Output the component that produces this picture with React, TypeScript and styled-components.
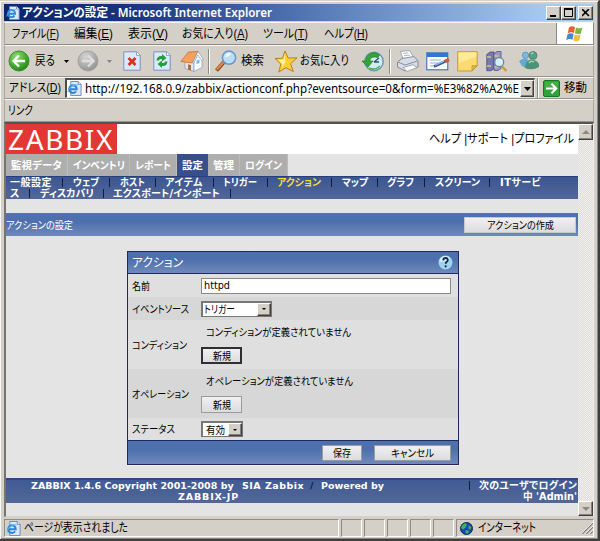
import React, { useLayoutEffect, useRef } from "react";
import styled, { createGlobalStyle, css } from "styled-components";

const GlobalStyle = createGlobalStyle`
  html, body { margin: 0; padding: 0; overflow: hidden; background: #d4d0c8; }
  *, *::before, *::after { box-sizing: border-box; }
  svg { display: block; flex: none; }
`;

/* ---------- text ---------- */

type LabelProps = {
  $size?: number;
  $color?: string;
  $weight?: number;
  $ml?: number;
  $face?: "tahoma" | "verdana" | "gothic";
};

const faces = {
  gothic: `"Liberation Sans", "Noto Sans CJK JP", sans-serif`,
  tahoma: `"Noto Sans", "Noto Sans CJK JP", sans-serif`,
  verdana: `"DejaVu Sans", "Noto Sans CJK JP", sans-serif`,
};

const Label = styled.span<LabelProps>`
  display: block;
  flex: none;
  white-space: pre;
  line-height: 14px;
  font-family: ${(p) => faces[p.$face ?? "gothic"]};
  font-size: ${(p) => p.$size ?? 12}px;
  font-weight: ${(p) => p.$weight ?? 400};
  color: ${(p) => p.$color ?? "#000"};
  margin-left: ${(p) => p.$ml ?? 0}px;
  font-feature-settings: "palt";
  text-underline-offset: 1px;
  transform-origin: 0 50%;
  u { text-decoration-thickness: 1px; }
`;

/* Label fitted to a width: tracked out when it is short, condensed when it is long. */
function Text({ w, children, ...rest }: LabelProps & { w: number; children: React.ReactNode }) {
  const ref = useRef<HTMLSpanElement>(null);
  useLayoutEffect(() => {
    const el = ref.current;
    if (!el) return;
    el.style.letterSpacing = "0px";
    el.style.transform = "none";
    el.style.marginRight = "0px";
    el.style.width = "max-content";
    const natural = el.getBoundingClientRect().width;
    const count = Math.max(1, (el.textContent ?? "").length);
    if (natural > w) {
      el.style.width = `${natural}px`;
      el.style.transform = `scaleX(${w / natural})`;
      el.style.marginRight = `${w - natural}px`;
    } else {
      el.style.letterSpacing = `${(w - natural) / count}px`;
      el.style.width = `${w}px`;
    }
  }, [w, children]);
  return (
    <Label ref={ref} {...rest}>
      {children}
    </Label>
  );
}

/* ---------- window chrome ---------- */

const Window = styled.div`
  width: 600px;
  height: 541px;
  padding: 3px 3px 2px 3px;
  background: #d4d0c8;
  border-top: 1px solid #d4d0c8;
  border-right: 2px solid #3e3e3e;
  border-bottom: 2px solid #3e3e3e;
  box-shadow: inset 1px 1px 0 #f8f8f6, inset -1px -1px 0 #8a8782;
  display: flex;
  flex-direction: column;
`;

const TitleBar = styled.div`
  height: 17px;
  flex: none;
  margin-left: 1px;
  margin-right: 1px;
  display: flex;
  align-items: center;
  padding: 0 1px 0 2px;
  background: linear-gradient(90deg, #0c276d 0%, #16337b 20%, #5478b4 52%, #a6caf0 92%);
`;

const Spring = styled.div`
  flex: 1;
`;

const Raised = css`
  background: #d4d0c8;
  border: 1px solid;
  border-color: #fff #404040 #404040 #fff;
  box-shadow: inset -1px -1px 0 #858279;
`;

const CaptionButton = styled.div<{ $gap?: number }>`
  ${Raised}
  width: 15px;
  height: 14px;
  margin-left: ${(p) => p.$gap ?? 0}px;
  display: flex;
  align-items: center;
  justify-content: center;
`;

const MenuBar = styled.div`
  height: 23px;
  flex: none;
  margin: 1px 1px 0;
  display: flex;
  align-items: center;
  border: 1px solid #8d8a83;
  border-left-color: #aaa79f;
  border-top-color: #f7f6f3;
`;

const Throbber = styled.div`
  width: 37px;
  height: 21px;
  background: #fff;
  border-left: 1px solid #8d8a83;
  display: flex;
  align-items: center;
  justify-content: center;
`;

const Bar = styled.div<{ $h: number; $pl?: number }>`
  height: ${(p) => p.$h}px;
  flex: none;
  margin: 0 1px;
  padding-left: ${(p) => p.$pl ?? 4}px;
  display: flex;
  align-items: center;
  border-left: 1px solid #aaa79f;
  border-right: 1px solid #aaa79f;
  border-top: 1px solid #f7f6f3;
  border-bottom: 1px solid #98958e;
`;

const Icon = styled.div<{ $w: number; $ml?: number }>`
  width: ${(p) => p.$w}px;
  margin-left: ${(p) => p.$ml ?? 0}px;
  flex: none;
`;

const Divider = styled.div<{ $ml: number; $h?: number }>`
  width: 2px;
  height: ${(p) => p.$h ?? 25}px;
  flex: none;
  margin-left: ${(p) => p.$ml}px;
  border-left: 1px solid #8d8a83;
  border-right: 1px solid #fff;
`;

const AddressField = styled.div`
  width: 470px;
  height: 20px;
  margin-left: 4px;
  flex: none;
  display: flex;
  align-items: center;
  background: #fff;
  border: 1px solid;
  border-width: 2px 1px 1px 2px;
  border-color: #4e4d4a #e8e6e0 #e8e6e0 #4e4d4a;
`;

const Url = styled.div`
  flex: 1;
  padding-left: 3px;
`;

const ArrowButton = styled.div<{ $w: number; $h: number }>`
  ${Raised}
  width: ${(p) => p.$w}px;
  height: ${(p) => p.$h}px;
  flex: none;
  display: flex;
  align-items: center;
  justify-content: center;
`;

/* ---------- viewport ---------- */

const Viewport = styled.div`
  height: 395px;
  flex: none;
  margin: 0 1px;
  display: flex;
  border: solid;
  border-width: 2px 1px 1px 2px;
  border-color: #56544f #efeeea #d4d0c8 #77746e;
`;

const Page = styled.div`
  width: 573px;
  background: #e4e4e4;
`;

const ScrollBar = styled.div`
  flex: 1;
  display: flex;
  flex-direction: column;
  justify-content: space-between;
  background: repeating-conic-gradient(#dedcd7 0 25%, #f1f0ee 0 50%) 0 0 / 2px 2px;
`;

const Header = styled.div`
  height: 30px;
  background: #fff;
  display: flex;
  align-items: center;
`;

const Logo = styled.div`
  width: 111px;
  height: 30px;
  background: #e33734;
  padding: 0 0 0 2px;
  display: flex;
  align-items: center;
`;

const Tabs = styled.div`
  height: 22px;
  display: flex;
`;

const Tab = styled.div<{ $w: number; $on?: boolean }>`
  width: ${(p) => p.$w}px;
  height: 22px;
  padding-left: 5px;
  display: flex;
  align-items: center;
  background: ${(p) => (p.$on ? "#374f8c" : "#aeaeae")};
  border-right: ${(p) => (p.$on ? "0" : "1px solid #bcbcbc")};
`;

const SubMenu = styled.div`
  height: 23px;
  border-top: 1px solid #293f7c;
  background: linear-gradient(#3a5692, #536797);
`;

const SubRow = styled.div`
  height: 11px;
  display: flex;
  align-items: center;
`;

const Pipe = styled.i<{ $ml: number }>`
  width: 1px;
  height: 9px;
  flex: none;
  margin-left: ${(p) => p.$ml}px;
  background: #101c3c;
`;

const blue = css`
  background: linear-gradient(#4c70b0, #4e6fac 35%, #6f89bb);
`;

const Heading = styled.div`
  ${blue}
  height: 23px;
  margin-top: 14px;
  border-top: 1px solid #5573ae;
  display: flex;
  align-items: center;
`;

const Button = styled.div<{ $w: number; $h: number; $ml?: number; $edge?: string; $bw?: number }>`
  width: ${(p) => p.$w}px;
  height: ${(p) => p.$h}px;
  margin-left: ${(p) => p.$ml ?? 0}px;
  flex: none;
  display: flex;
  align-items: center;
  justify-content: center;
  background: linear-gradient(#f0f0f1, #dcdcdf);
  border: ${(p) => p.$bw ?? 1}px solid ${(p) => p.$edge ?? "#9b9b9b"};
`;

const Form = styled.div`
  width: 332px;
  height: 214px;
  margin: 15px 0 0 121px;
  border: 1px solid #23285c;
  background: #dedede;
  box-shadow: 0 1px 0 #f5f5f5;
`;

const FormHead = styled.div`
  ${blue}
  height: 22px;
  display: flex;
  align-items: center;
  justify-content: space-between;
  padding: 0 5px 0 4px;
  border-bottom: 1px solid #23285c;
`;

const Row = styled.div<{ $h: number; $alt?: boolean }>`
  height: ${(p) => p.$h}px;
  display: flex;
  align-items: center;
  background: ${(p) => (p.$alt ? "#d7d7d7" : "#dfdfdf")};
`;

const Name = styled.div`
  width: 73px;
  padding-left: 4px;
  flex: none;
`;

const Stack = styled.div`
  display: flex;
  flex-direction: column;
  gap: 8px;
  align-items: flex-start;
`;

const Input = styled.div`
  width: 250px;
  height: 16px;
  padding-left: 2px;
  display: flex;
  align-items: center;
  background: #fff;
  border: 1px solid #8b8888;
`;

const Select = styled.div<{ $w: number }>`
  width: ${(p) => p.$w}px;
  height: 16px;
  display: flex;
  align-items: center;
  justify-content: space-between;
  background: #fff;
  border: 1px solid #777;
  border-width: 2px 1px 1px 2px;
`;

const FormFoot = styled.div`
  ${blue}
  height: 24px;
  border-top: 1px solid #23285c;
  display: flex;
  align-items: center;
  justify-content: flex-end;
  padding-right: 7px;
`;

const Footer = styled.div`
  height: 25px;
  margin-top: 13px;
  padding-right: 1px;
  display: flex;
  border-top: 2px solid #31477f;
  background: linear-gradient(#405b95, #536797);
`;

const Credits = styled.div`
  width: 356px;
  padding-left: 25px;
`;

const FootLine = styled.div`
  height: 11px;
  display: flex;
  align-items: center;
`;

const UserBox = styled.div`
  flex: 1;
  display: flex;
  flex-direction: column;
  align-items: flex-end;
`;

const Status = styled.div`
  flex: none;
  height: 18px;
  margin: 2px 1px 0;
  display: flex;
  gap: 2px;
`;

const Pane = styled.div<{ $w: number }>`
  width: ${(p) => p.$w}px;
  height: 18px;
  flex: none;
  display: flex;
  align-items: center;
  padding-left: 1px;
  border: 1px solid;
  border-color: #8f8c85 #fff #fff #8f8c85;
`;

/* ---------- drawings ---------- */

const PageE = ({ s = 16 }: { s?: number }) => (
  <svg width={s} height={s} viewBox="0 0 16 16">
    <path d="M4 .5h8l3 3v12H4z" fill="#dce8fa" stroke="#6888be" />
    <path d="M12 .5v3h3" fill="#fff" stroke="#6888be" />
    <path d="M2.2 8.9h8.2A4.1 4.1 0 1 0 9.7 11" fill="none" stroke="#2c86d2" strokeWidth="2.1" />
    <path d="M1 12C1 8 6 3.4 11.5 4.2" fill="none" stroke="#58b2ee" strokeWidth="1.1" />
  </svg>
);

const Flag = () => (
  <svg width="20" height="18" viewBox="0 0 20 18">
    <path d="M4 2.4q3-2 6-.3L8.9 8q-3-1.6-6.2.4z" fill="#e4602c" />
    <path d="M11 2.6q3 1.5 6.4-.2l-1.5 6q-3 1.5-6-.1z" fill="#7fb83c" />
    <path d="M2.5 9.4q3-2 6.1-.4l-1.1 5.8q-3-1.6-6.4.5z" fill="#4388d6" />
    <path d="M9.6 9.5q3 1.5 6.1 0l-1.5 6q-3 1.6-5.8-.2z" fill="#f4c032" />
  </svg>
);

const Circle = ({ back }: { back?: boolean }) => (
  <svg width="22" height="22" viewBox="0 0 22 22">
    <defs>
      <radialGradient id={back ? "gb" : "gf"} cx=".38" cy=".28" r=".8">
        <stop offset="0" stopColor={back ? "#8ede68" : "#d4d4d4"} />
        <stop offset=".6" stopColor={back ? "#40ab2d" : "#aaa"} />
        <stop offset="1" stopColor={back ? "#207a1a" : "#8e8e8e"} />
      </radialGradient>
    </defs>
    <circle cx="11" cy="11" r="10" fill={`url(#${back ? "gb" : "gf"})`} stroke={back ? "#3b8c35" : "#a4a29e"} />
    <path
      d={back ? "M11 5.5 5.5 11l5.5 5.5M6 11h11" : "M11 5.5l5.5 5.5-5.5 5.5M16 11H5"}
      fill="none"
      stroke={back ? "#fff" : "#dededc"}
      strokeWidth="2.4"
    />
  </svg>
);

const Caret = ({ w = 5, color = "#000" }: { w?: number; color?: string }) => (
  <svg width={w} height={Math.ceil(w / 2)} viewBox="0 0 6 3" preserveAspectRatio="none">
    <path d="M0 0h6L3 3z" fill={color} />
  </svg>
);

const CaretUp = () => (
  <svg width="8" height="4" viewBox="0 0 8 4">
    <path d="M0 4h8L4 0z" fill="#8d8a83" />
  </svg>
);

const Sheet = ({ children }: { children: React.ReactNode }) => (
  <svg width="18" height="20" viewBox="0 0 18 20">
    <path d="M.8.8h13l3.4 3.4v15H.8z" fill="#dce8fb" stroke="#7590c5" />
    <path d="M13.5.8v3.6h3.7" fill="#fff" stroke="#7590c5" strokeWidth=".8" />
    {children}
  </svg>
);

const Home = () => (
  <svg width="24" height="22" viewBox="0 0 24 22">
    <path d="M5 10v8.500l9 3V11z" fill="#dfe9f8" stroke="#8399bd" strokeWidth=".7" />
    <path d="M14 21.500V10l4-6 4 5v8.500z" fill="#fbfdff" stroke="#8399bd" strokeWidth=".7" />
    <path d="M.8 11.500 8.500 2 18 1.500 12.500 13z" fill="#f3a05a" stroke="#c96c35" strokeWidth=".8" />
    <path d="M18 1.500l5.500 8-1.800.8L17.800 5 13.500 13.500l-1-.5z" fill="#fff" stroke="#8299bd" strokeWidth=".7" />
    <path d="M8 14.200l3 .8v5.500l-3-1z" fill="#a87145" />
    <path d="M16.500 10.500l3-1v3.500l-3 1z" fill="#7fb2e6" />
  </svg>
);

const Search = () => (
  <svg width="22" height="22" viewBox="0 0 22 22">
    <path d="M1.5 20.5 9 12" stroke="#8b4c20" strokeWidth="4" />
    <path d="M1.8 19.6 8.6 12" stroke="#e08c46" strokeWidth="2" />
    <circle cx="14" cy="7.7" r="6.6" fill="#b8defb" stroke="#6b95ca" strokeWidth="1.5" />
    <path d="M10 7a4.2 4.2 0 0 1 6-3.5q-1 3-6 3.5z" fill="#fff" />
  </svg>
);

const Star = () => (
  <svg width="24" height="23" viewBox="0 0 24 23">
    <path d="M11 1l3.2 7.1 8.8-.3-6.4 6 2.7 7.7-7.5-3.8-7 4.4 2-8L1 8.5l7.5-.3z" fill="#f8cf38" stroke="#bd7e18" strokeLinejoin="round" />
    <path d="M11 3.5 9.4 9.5 4 9.9l4.7 4-1.4 4.6 4-6z" fill="#fff19a" />
  </svg>
);

const History = () => (
  <svg width="23" height="21" viewBox="0 0 23 21">
    <circle cx="13" cy="10.5" r="9.2" fill="#d3ebf8" stroke="#6c9cac" strokeWidth="1.5" />
    <path d="M18.5 4A8 8 0 0 0 5 10H1l6 6 5-6H8.5a5 5 0 0 1 8-3z" fill="#35a634" stroke="#1b771f" strokeWidth=".7" />
    <path d="M13 11l5-4M13 11h5" stroke="#34506c" strokeWidth="1.3" />
    <path d="M8 17q6 3 11-2" stroke="#53b054" strokeWidth="1.5" fill="none" />
  </svg>
);

const Printer = () => (
  <svg width="23" height="22" viewBox="0 0 23 22">
    <path d="M7 9 4.5 1.5l9-1L18 8z" fill="#fff" stroke="#8898b8" strokeWidth=".8" />
    <path d="M7 3.5l5.5-.6M8 5.7l6-.6" stroke="#a5b5d2" />
    <path d="M1.5 12 6 8.5l12-2 4 4.5v6l-13 4-7.5-4z" fill="#d8dce6" stroke="#717789" strokeWidth=".8" />
    <path d="M2 12l7 3 12.5-4" fill="none" stroke="#8b90a0" />
    <path d="M7 17.5l10-2.8 4 3-10 3.8z" fill="#f9fafc" stroke="#8e95a4" strokeWidth=".8" />
  </svg>
);

const EditIcon = () => (
  <svg width="24" height="19" viewBox="0 0 24 19">
    <rect x=".8" y=".8" width="21" height="17" fill="#f8fbff" stroke="#2869b9" />
    <path d="M1 1h21v4H1z" fill="#2e79d1" />
    <path d="M4 8h11M4 11h8M4 14h5" stroke="#9bb2d1" />
    <path d="M8 14.5 20 9" stroke="#385d9a" strokeWidth="3" />
    <path d="M9 13.3l9-4" stroke="#a4cef2" />
    <path d="M19 9.4l4-1.8" stroke="#d95633" strokeWidth="3.4" />
  </svg>
);

const Note = () => (
  <svg width="21" height="21" viewBox="0 0 21 21">
    <path d="M.7.7h19.5v14L15 20H.7z" fill="#fbdb70" stroke="#c69a35" />
    <path d="M1.5 1.5h17.8v4L2 12z" fill="#fdeb9a" />
    <path d="M15 20v-5.3h5.2z" fill="#e6b847" stroke="#b98b2d" strokeWidth=".7" />
  </svg>
);

const Books = () => (
  <svg width="22" height="21" viewBox="0 0 22 21">
    <path d="M.8 3.5 4 1h4v16.5l-3 2.2H.8z" fill="#7678b4" stroke="#44477e" strokeWidth=".8" />
    <path d="M8 2.5 11 .5h4v17l-3 2H8z" fill="#9996ca" stroke="#55568a" strokeWidth=".8" />
    <path d="M1 6h4M1 15h4M8.5 5h4M8.5 16h4" stroke="#ddc96e" strokeWidth="1.3" />
    <path d="M15.5 15l5 5" stroke="#c99a3c" strokeWidth="2.4" />
    <circle cx="13.2" cy="11.2" r="4.5" fill="#d6effd" stroke="#69869d" strokeWidth="1.3" />
  </svg>
);

const People = () => (
  <svg width="22" height="20" viewBox="0 0 22 20">
    <circle cx="7.5" cy="4.3" r="3.2" fill="#7bb8df" stroke="#517e9d" strokeWidth=".6" />
    <path d="M1 10.5q4-4.5 9-2l-1 8q-5 .5-7-5z" fill="#66a8cf" />
    <circle cx="15" cy="4.5" r="4" fill="#59a183" stroke="#376b5b" strokeWidth=".6" />
    <path d="M8 12q3-5 8-3 6 2 5 7-7 4-14 1z" fill="#4a9278" />
    <path d="M13 3.2q1-1.6 2.4-1.1M11 12q2-3 5-1" fill="none" stroke="#a2d7bd" strokeWidth="1.4" />
  </svg>
);

const Go = () => (
  <svg width="17" height="17" viewBox="0 0 17 17">
    <rect x=".5" y=".5" width="16" height="16" rx="1.5" fill="#30a438" stroke="#167920" />
    <path d="M2 2h13v5H2z" fill="#62bd60" opacity=".45" />
    <path d="M3 8.5h10M8.5 3.7l4.8 4.8-4.8 4.8" fill="none" stroke="#fff" strokeWidth="2" />
  </svg>
);

const Globe = () => (
  <svg width="13" height="13" viewBox="0 0 13 13">
    <circle cx="6.5" cy="6.5" r="6" fill="#1742c2" stroke="#112355" />
    <path d="M2 3.3 5 1l2 1.5-1.2 3L3 7.5 1 6zM8.5 3l3 2-1 2.5-2-.5zM5.5 8l4 1-2 3-2-1z" fill="#38b64b" />
  </svg>
);

const Help = () => (
  <svg width="15" height="15" viewBox="0 0 15 15">
    <circle cx="7.5" cy="7.5" r="7" fill="#9bd4ee" />
    <path d="M1.3 6.5a6.3 6.3 0 0 1 11-3.3Q9 7.5 1.3 6.5z" fill="#d7f0fb" />
    <path d="M5.2 5.3Q5.4 3 7.6 3t2.2 2q0 1.2-1.3 2-.8.6-.8 1.8" fill="none" stroke="#14284c" strokeWidth="1.8" />
    <circle cx="7.7" cy="11.3" r="1.1" fill="#14284c" />
  </svg>
);

const Grip = () => (
  <svg width="12" height="12" viewBox="0 0 12 12">
    <path d="M1 12 12 1M5 12l7-7M9 12l3-3" stroke="#85827b" strokeWidth="1.4" />
    <path d="M0 12 12 0M4 12l8-8M8 12l4-4" stroke="#fff" strokeWidth=".7" />
  </svg>
);

/* ---------- data ---------- */

const menus: [string, string, number, number][] = [
  ["ファイル", "F", 47, 7],
  ["編集", "E", 39, 15],
  ["表示", "V", 40, 15],
  ["お気に入り", "A", 66, 14],
  ["ツール", "T", 45, 15],
  ["ヘルプ", "H", 44, 16],
];

const tabs: [string, number, number][] = [
  ["監視データ", 62, 51],
  ["インベントリ", 62, 52],
  ["レポート", 47, 36],
  ["設定", 31, 21],
  ["管理", 32, 21],
  ["ログイン", 48, 37],
];

/* text, left gap, width, gap before the separator */
const sub1: [string, number, number, number][] = [
  ["一般設定", 4, 42, 10],
  ["ウェブ", 10, 26, 10],
  ["ホスト", 10, 25, 10],
  ["アイテム", 9, 38, 10],
  ["トリガー", 9, 34, 10],
  ["アクション", 9, 44, 10],
  ["マップ", 10, 26, 9],
  ["グラフ", 9, 27, 10],
  ["スクリーン", 10, 45, 9],
];
const sub2: [string, number, number, number][] = [
  ["ス", 4, 10, 9],
  ["ディスカバリ", 10, 54, 9],
  ["エクスポート/インポート", 9, 107, 10],
];

const SubItems = ({ items }: { items: typeof sub1 }) => (
  <>
    {items.map(([t, ml, w, gap]) => (
      <React.Fragment key={t}>
        <Text w={w} $ml={ml} $size={10} $weight={700} $color={t === "アクション" ? "#f3df32" : "#fff"} $face="verdana">
          {t}
        </Text>
        <Pipe $ml={gap} />
      </React.Fragment>
    ))}
  </>
);

export default function App() {
  return (
    <>
      <GlobalStyle />
      <Window>
        <TitleBar>
          <PageE s={14} />
          <Text w={250} $ml={2} $size={12} $weight={600} $color="#fff" $face="tahoma">
            アクションの設定 - Microsoft Internet Explorer
          </Text>
          <Spring />
          <CaptionButton>
            <svg width="9" height="8"><path d="M1 6h6v2H1z" /></svg>
          </CaptionButton>
          <CaptionButton>
            <svg width="10" height="9"><path d="M.5 1.5h8v7h-8z" fill="none" stroke="#000" /><path d="M0 0h9v2H0z" /></svg>
          </CaptionButton>
          <CaptionButton $gap={2}>
            <svg width="8" height="8"><path d="M0 0l7 7M7 0L0 7" stroke="#000" strokeWidth="1.6" /></svg>
          </CaptionButton>
        </TitleBar>

        <MenuBar>
          {menus.map(([t, k, w, ml]) => (
            <Text key={t} w={w} $ml={ml} $size={12}>
              {t}(<u>{k}</u>)
            </Text>
          ))}
          <Spring />
          <Throbber><Flag /></Throbber>
        </MenuBar>

        <Bar $h={32} $pl={3}>
          <Icon $w={22}><Circle back /></Icon>
          <Text w={20} $ml={5}>戻る</Text>
          <Icon $w={5} $ml={9}><Caret /></Icon>
          <Icon $w={22} $ml={8}><Circle /></Icon>
          <Icon $w={5} $ml={8}><Caret color="#888580" /></Icon>
          <Icon $w={18} $ml={11}>
            <Sheet><path d="M5.5 7l7 7M12.5 7l-7 7" stroke="#df3019" strokeWidth="2.8" /></Sheet>
          </Icon>
          <Icon $w={18} $ml={12}>
            <Sheet>
              <path d="M3.500 9.500Q4 4.500 9 5V3l4.500 4L9 10.500V8Q6 7.500 6 9.500zM14.500 10.500Q14 15.500 9 15v2l-4.500-4L9 9.500V12q3 .500 3-1.500z" fill="#20a03a" />
            </Sheet>
          </Icon>
          <Icon $w={24} $ml={9}><Home /></Icon>
          <Divider $ml={4} />
          <Icon $w={22} $ml={5}><Search /></Icon>
          <Text w={23} $ml={4}>検索</Text>
          <Icon $w={24} $ml={10}><Star /></Icon>
          <Text w={49} $ml={2}>お気に入り</Text>
          <Icon $w={23} $ml={12}><History /></Icon>
          <Divider $ml={5} />
          <Icon $w={23} $ml={5}><Printer /></Icon>
          <Icon $w={24} $ml={7}><EditIcon /></Icon>
          <Icon $w={21} $ml={7}><Note /></Icon>
          <Icon $w={22} $ml={8}><Books /></Icon>
          <Icon $w={22} $ml={10}><People /></Icon>
        </Bar>

        <Bar $h={22} $pl={4}>
          <Text w={52}>アドレス(<u>D</u>)</Text>
          <AddressField>
            <PageE s={15} />
            <Url>
              <Text w={434} $size={12} $face="tahoma">
                http://192.168.0.9/zabbix/actionconf.php?eventsource=0&amp;form=%E3%82%A2%E
              </Text>
            </Url>
            <ArrowButton $w={14} $h={17}><Caret w={7} /></ArrowButton>
          </AddressField>
          <Divider $ml={2} $h={20} />
          <Icon $w={17} $ml={4}><Go /></Icon>
          <Text w={23} $ml={4}>移動</Text>
        </Bar>

        <Bar $h={23} $pl={3}>
          <Text w={25}>リンク</Text>
        </Bar>

        <Viewport>
          <Page>
            <Header>
              <Logo>
                <Text w={106} $size={28} $color="#fff" $face="tahoma">ZABBIX</Text>
              </Logo>
              <Text w={145} $ml={312} $size={12}>ヘルプ |サポート |プロファイル</Text>
            </Header>
            <Tabs>
              {tabs.map(([t, w, tw]) => (
                <Tab key={t} $w={w} $on={t === "設定"}>
                  <Text w={tw} $size={10.5} $weight={700} $color="#fff">{t}</Text>
                </Tab>
              ))}
            </Tabs>
            <SubMenu>
              <SubRow>
                <SubItems items={sub1} />
                <Text w={41} $ml={10} $size={10} $weight={700} $color="#fff" $face="verdana">ITサービ</Text>
              </SubRow>
              <SubRow><SubItems items={sub2} /></SubRow>
            </SubMenu>
            <Heading>
              <Text w={67} $ml={0} $size={10.5} $color="#fff">アクションの設定</Text>
              <Button $w={112} $h={16} $ml={391} $edge="#c8c8cc">
                <Text w={67} $size={10.5}>アクションの作成</Text>
              </Button>
            </Heading>
            <Form>
              <FormHead>
                <Text w={51} $size={12} $color="#fff">アクション</Text>
                <Help />
              </FormHead>
              <Row $h={23}>
                <Name><Text w={18} $size={10.5}>名前</Text></Name>
                <Input><Text w={26} $size={10} $face="verdana">httpd</Text></Input>
              </Row>
              <Row $h={23} $alt>
                <Name><Text w={57} $size={10.5}>イベントソース</Text></Name>
                <Select $w={71}>
                  <Text w={31} $ml={1} $size={10.5}>トリガー</Text>
                  <ArrowButton $w={14} $h={13}><Caret w={4} /></ArrowButton>
                </Select>
              </Row>
              <Row $h={49}>
                <Name><Text w={55} $size={10.5}>コンディション</Text></Name>
                <Stack>
                  <Text w={145} $ml={5} $size={10.5}>コンディションが定義されていません</Text>
                  <Button $w={41} $h={17} $edge="#303034" $bw={2}>
                    <Text w={18} $size={10.5}>新規</Text>
                  </Button>
                </Stack>
              </Row>
              <Row $h={49} $alt>
                <Name><Text w={57} $size={10.5}>オペレーション</Text></Name>
                <Stack>
                  <Text w={147} $ml={5} $size={10.5}>オペレーションが定義されていません</Text>
                  <Button $w={41} $h={17}>
                    <Text w={18} $size={10.5}>新規</Text>
                  </Button>
                </Stack>
              </Row>
              <Row $h={22}>
                <Name><Text w={43} $size={10.5}>ステータス</Text></Name>
                <Select $w={42}>
                  <Text w={19} $ml={3} $size={10.5}>有効</Text>
                  <ArrowButton $w={14} $h={13}><Caret w={4} /></ArrowButton>
                </Select>
              </Row>
              <FormFoot>
                <Button $w={40} $h={16}><Text w={18} $size={10.5}>保存</Text></Button>
                <Button $w={77} $h={16} $ml={12}><Text w={43} $size={10.5}>キャンセル</Text></Button>
              </FormFoot>
            </Form>
            <Footer>
              <Credits>
                <FootLine>
                  <Text w={206} $size={9.5} $weight={700} $color="#fff" $face="verdana">ZABBIX 1.4.6 Copyright 2001-2008 by </Text>
                  <Text w={62} $ml={5} $size={9.5} $weight={700} $color="#fff" $face="verdana">SIA Zabbix</Text>
                  <Text w={4} $ml={6} $size={9.5} $weight={700} $color="#101c3c" $face="verdana">/</Text>
                  <Text w={63} $ml={7} $size={9.5} $weight={700} $color="#fff" $face="verdana">Powered by</Text>
                </FootLine>
                <FootLine>
                  <Text w={61} $ml={147} $size={9.5} $weight={700} $color="#fff" $face="verdana">ZABBIX-JP</Text>
                </FootLine>
              </Credits>
              <UserBox>
                <FootLine>
                  <Pipe $ml={0} />
                  <Text w={98} $ml={9} $size={10} $weight={700} $color="#fff" $face="verdana">次のユーザでログイン</Text>
                </FootLine>
                <FootLine>
                  <Text w={54} $size={10} $weight={700} $color="#fff" $face="verdana">中 'Admin'</Text>
                </FootLine>
              </UserBox>
            </Footer>
          </Page>
          <ScrollBar>
            <ArrowButton $w={15} $h={16}><CaretUp /></ArrowButton>
            <ArrowButton $w={15} $h={15}><Caret w={8} color="#8d8a83" /></ArrowButton>
          </ScrollBar>
        </Viewport>

        <Status>
          <Pane $w={335}>
            <PageE s={15} />
            <Text w={104} $ml={3}>ページが表示されました</Text>
          </Pane>
          {[0, 1, 2, 3, 4].map((i) => <Pane key={i} $w={21} />)}
          <Pane $w={138}>
            <Icon $w={13} $ml={2}><Globe /></Icon>
            <Text w={58} $ml={5}>インターネット</Text>
            <Spring />
            <Grip />
          </Pane>
        </Status>
      </Window>
    </>
  );
}
